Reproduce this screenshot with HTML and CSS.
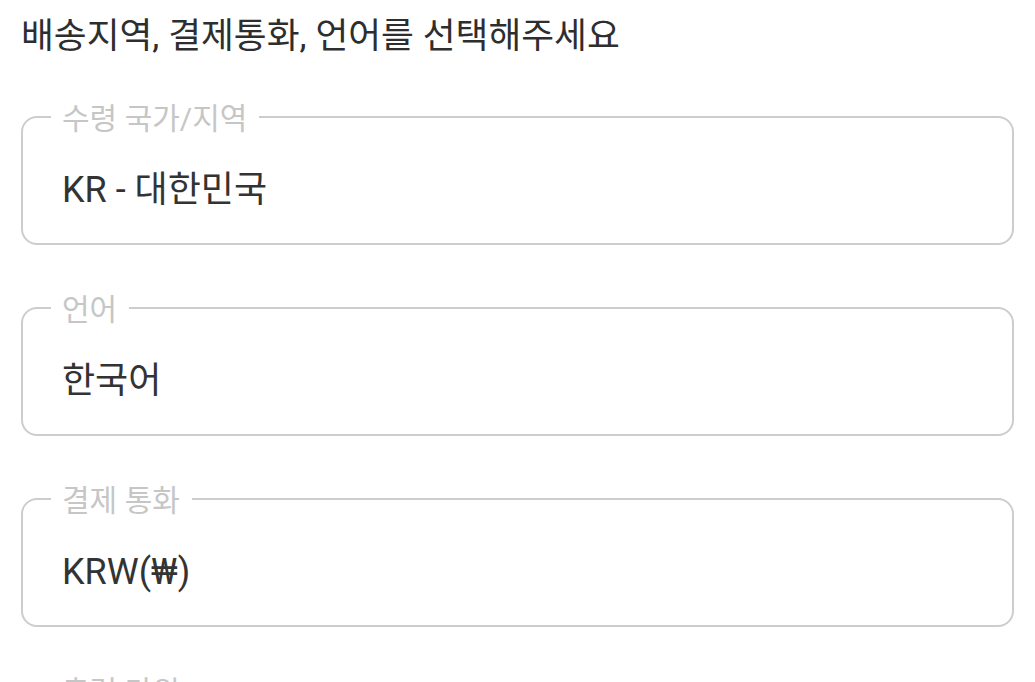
FILE: index.html
```html
<!DOCTYPE html>
<html lang="ko">
<head>
<meta charset="utf-8">
<title>배송지역 선택</title>
<link rel="stylesheet" href="styles.css">
</head>
<body>
<main class="page">
  <h1 class="title">배송지역, 결제통화, 언어를 선택해주세요</h1>
  <form class="fields">
    <fieldset class="field">
      <legend class="field-label">수령 국가/지역</legend>
      <div class="field-value">KR - 대한민국</div>
    </fieldset>
    <fieldset class="field">
      <legend class="field-label">언어</legend>
      <div class="field-value">한국어</div>
    </fieldset>
    <fieldset class="field">
      <legend class="field-label">결제 통화</legend>
      <div class="field-value">KRW(₩)</div>
    </fieldset>
    <fieldset class="field">
      <legend class="field-label">출력 단위</legend>
      <div class="field-value">cm</div>
    </fieldset>
  </form>
</main>
</body>
</html>
```
FILE: styles.css
```css
html, body {
  margin: 0;
  padding: 0;
  background: #ffffff;
}
body {
  font-family: Roboto, "Noto Sans CJK KR", sans-serif;
  color: #333333;
}
.page {
  padding: 16px 21px 0 21px;
  display: flex;
  flex-direction: column;
  gap: 42px;
}
.title {
  margin: 0;
  font-size: 35.7px;
  line-height: 40px;
  font-weight: 400;
  color: #2e2e2e;
}
.fields {
  margin: 0;
  display: flex;
  flex-direction: column;
  gap: 44px;
}
.field {
  margin: 0;
  padding: 0 0 31px 0;
  border: 2px solid #cdcdcd;
  border-radius: 16px;
  min-width: 0;
}
.field-label {
  margin-left: 28px;
  padding: 4px 12px 0 11px;
  font-size: 30px;
  line-height: 34px;
  color: #c6c6c6;
}
.field-value {
  padding: 32px 0 0 39px;
  font-size: 36px;
  line-height: 44px;
  color: #333333;
}
```
